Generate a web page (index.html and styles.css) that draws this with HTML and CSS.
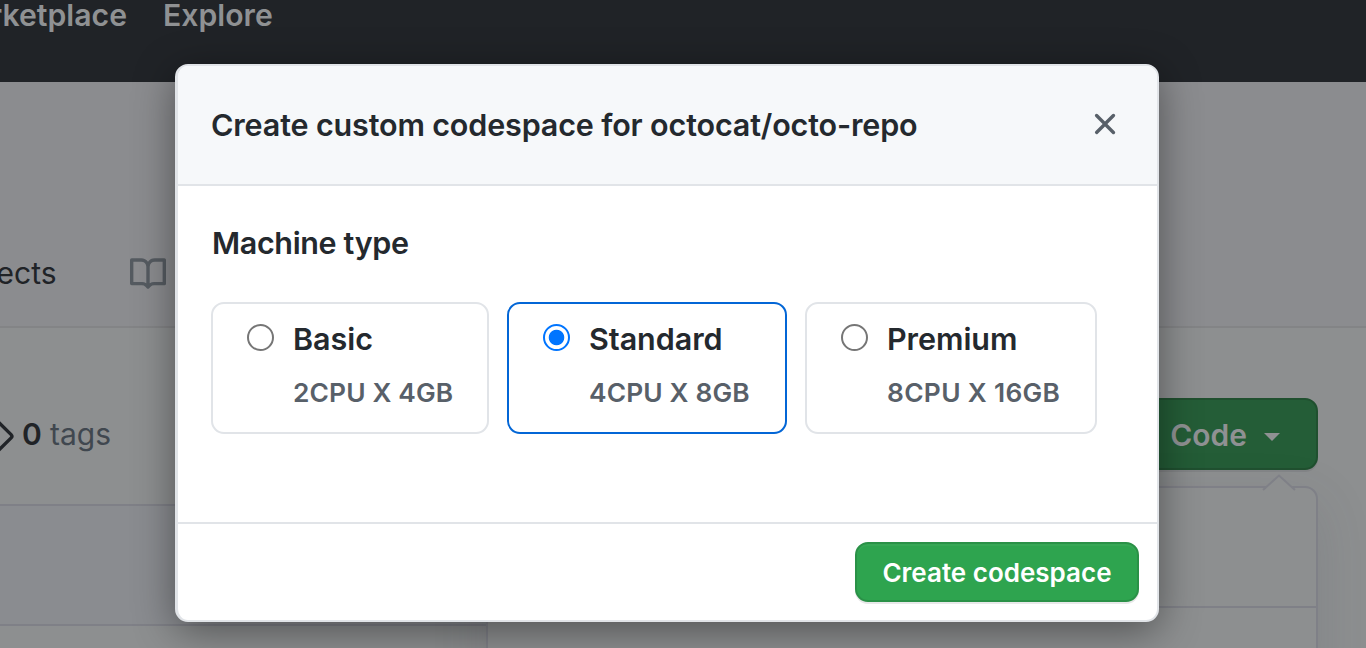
FILE: index.html
```html
<!DOCTYPE html>
<html lang="en">
<head>
<meta charset="utf-8">
<title>Create custom codespace</title>
<link rel="stylesheet" href="styles.css">
</head>
<body>
<div class="page">
  <header class="topbar">
    <nav class="topnav"><span class="topnav-first">Marketplace</span><span class="topnav-item">Explore</span></nav>
  </header>
  <section class="repo-head">
    <div class="tabs">
      <span class="tab-projects">Projects</span>
      <svg class="icon-book" viewBox="0 0 16 16"><path fill-rule="evenodd" d="M0 1.75A.75.75 0 01.75 1h4.253c1.227 0 2.317.59 3 1.501A3.744 3.744 0 0111.006 1h4.245a.75.75 0 01.75.75v10.5a.75.75 0 01-.75.75h-4.507a2.25 2.25 0 00-1.591.659l-.622.621a.75.75 0 01-1.06 0l-.622-.621A2.25 2.25 0 005.258 13H.75a.75.75 0 01-.75-.75V1.75zm8.755 3a2.25 2.25 0 012.25-2.25H14.5v9h-3.757c-.71 0-1.4.201-1.992.572l.004-7.322zm-1.504 7.324l.004-5.073-.002-2.253A2.25 2.25 0 005.003 2.5H1.5v9h3.757a3.75 3.75 0 011.994.574z"/></svg>
    </div>
  </section>
  <section class="toolbar">
    <div class="tags">
      <svg class="icon-tag" viewBox="0 0 16 16"><path fill-rule="evenodd" d="M2.5 7.775V2.75a.25.25 0 01.25-.25h5.025a.25.25 0 01.177.073l6.25 6.25a.25.25 0 010 .354l-5.025 5.025a.25.25 0 01-.354 0l-6.25-6.25a.25.25 0 01-.073-.177zm-1.5 0V2.75C1 1.784 1.784 1 2.75 1h5.025c.464 0 .91.184 1.238.513l6.25 6.25a1.75 1.75 0 010 2.474l-5.026 5.026a1.75 1.75 0 01-2.474 0l-6.25-6.25A1.75 1.75 0 011 7.775zM6 5a1 1 0 100 2 1 1 0 000-2z"/></svg>
      <b class="tag-count">0</b><span class="tag-label">tags</span>
    </div>
    <div class="code-wrap">
      <div class="code-btn"><span class="code-label">Code</span><i class="caret"></i></div>
      <div class="menu"><svg class="menu-arrow" viewBox="0 0 34 18"><path d="M1 16L17 1.5L33 16" /></svg><div class="menu-row"></div></div>
    </div>
  </section>
  <section class="files"><div class="file-head"></div><div class="file-row"></div></section>
</div>

<div class="backdrop">
  <div class="dialog" role="dialog">
    <header class="dialog-head">
      <h1 class="dialog-title">Create custom codespace for octocat/octo-repo</h1>
      <svg class="icon-x" viewBox="0 0 16 16"><path fill-rule="evenodd" d="M3.72 3.72a.75.75 0 011.06 0L8 6.94l3.22-3.22a.75.75 0 111.06 1.06L9.06 8l3.22 3.22a.75.75 0 11-1.06 1.06L8 9.06l-3.22 3.22a.75.75 0 01-1.06-1.06L6.94 8 3.72 4.78a.75.75 0 010-1.06z"/></svg>
    </header>
    <div class="dialog-body">
      <h2 class="section-title">Machine type</h2>
      <div class="options">
        <label class="option basic"><i class="radio"></i><span class="option-text"><span class="option-name">Basic</span><span class="option-spec">2CPU X 4GB</span></span></label>
        <label class="option standard selected"><i class="radio"></i><span class="option-text"><span class="option-name">Standard</span><span class="option-spec">4CPU X 8GB</span></span></label>
        <label class="option premium"><i class="radio"></i><span class="option-text"><span class="option-name">Premium</span><span class="option-spec">8CPU X 16GB</span></span></label>
      </div>
    </div>
    <footer class="dialog-foot"><button class="create-btn">Create codespace</button></footer>
  </div>
</div>
</body>
</html>
```
FILE: styles.css
```css
* { box-sizing: border-box; }
body { margin: 0; width: 1366px; height: 648px; overflow: hidden; position: relative; font-family: Inter, "Liberation Sans", sans-serif; color: #24292e; }
h1, h2 { margin: 0; font-weight: 600; }
i { display: block; }
span, b, h1, h2 { white-space: nowrap; }

.page { height: 648px; overflow: hidden; background: #8d8f90; display: flex; flex-direction: column; }
.topbar { flex: none; height: 82px; background: #202327; }
.topnav { display: flex; gap: 36px; height: 30px; line-height: 30px; font-size: 30.2px; font-weight: 600; color: #8f9193; }
.topnav-first { width: 127px; display: flex; justify-content: flex-end; }
.repo-head { flex: none; height: 246px; padding-top: 173px; background: #8b8c8f; border-bottom: 2px solid #838486; }
.tabs { display: flex; height: 37px; line-height: 37px; font-size: 30px; color: #202327; }
.tab-projects { width: 56.5px; display: flex; justify-content: flex-end; }
.icon-book { flex: none; width: 36px; height: 36px; margin-left: 73.5px; margin-top: 1px; fill: #555b61; }
.toolbar { flex: none; height: 176px; padding: 70px 48px 0 0; display: flex; justify-content: space-between; }
.tags { display: flex; height: 72px; line-height: 72px; font-size: 30px; }
.icon-tag { flex: none; width: 36px; height: 36px; margin: 18px 8px 0 -22px; fill: #202327; }
.tag-count { font-weight: 600; color: #202327; width: 28px; }
.tag-label { color: #40474f; }
.code-wrap { position: relative; width: 220px; }
.code-btn { height: 72px; border: 2px solid #20502f; border-radius: 13px; background: #245d37; display: flex; align-items: center; justify-content: flex-end; padding-right: 36px; box-shadow: 0 2px 0 rgba(27,31,35,.08); }
.code-label { margin-top: 2px; font-size: 30px; font-weight: 600; color: #8f9193; }
.caret { margin: 5px 0 0 17px; border: 8px solid transparent; border-top-color: #8f9193; border-bottom: 0; }
.menu { position: absolute; top: 88px; right: 0; width: 832px; height: 200px; border: 2px solid #7f8087; border-radius: 13px; background: #8d8f90; box-shadow: 0 18px 54px rgba(70,74,84,.15); }
.menu-arrow { position: absolute; right: 20px; top: -14px; width: 34px; height: 18px; fill: #8d8f90; stroke: #7f8087; stroke-width: 2; }
.menu-row { height: 120px; border-bottom: 2px solid #7f8087; }
.files { width: 488px; flex: 1; border: 2px solid #7f8087; border-width: 2px 2px 0 0; }
.file-head { height: 120px; background: #8a8c90; border-bottom: 2px solid #7f8087; }

.backdrop { position: absolute; inset: 0; padding: 64px 0 0 175px; }
.dialog { width: 984px; height: 558px; border: 2px solid #e1e4e8; border-left-width: 3px; border-radius: 13px; background: #fff; display: flex; flex-direction: column; overflow: hidden; box-shadow: 0 9px 42px rgba(0,0,0,.43); }
.dialog-head { flex: none; height: 120px; padding: 0 34px 0 33px; display: flex; justify-content: space-between; align-items: center; background: #f6f8fa; border-bottom: 2px solid #e1e4e8; }
.dialog-title { font-size: 30.5px; line-height: 40px; letter-spacing: -.15px; }
.icon-x { width: 36px; height: 36px; margin-bottom: 2px; fill: #586069; }
.dialog-body { flex: 1; padding: 37px 33px 0; }
.section-title { padding-left: 1px; font-size: 30.5px; line-height: 40px; letter-spacing: -.36px; }
.options { display: flex; gap: 18px; margin-top: 39px; }
.option { height: 132px; border: 2px solid #e1e4e8; border-radius: 13px; display: flex; padding: 20px 0 0 34px; }
.basic { width: 278px; }
.standard { width: 280px; }
.premium { width: 292px; }
.selected { border-color: #0366d6; }
.radio { flex: none; width: 27px; height: 27px; margin: 0 19px 0 0; border: 2px solid #767676; border-radius: 50%; }
.selected .radio { border-color: #0075ff; background: radial-gradient(circle, #0075ff 7.3px, #fff 8.2px); }
.option-text { display: flex; flex-direction: column; }
.option-name { font-size: 30.5px; font-weight: 600; line-height: 30px; letter-spacing: -.05px; }
.option-spec { font-size: 26.3px; font-weight: 600; line-height: 32px; margin-top: 23px; letter-spacing: .15px; color: #586069; }
.premium .option-spec { letter-spacing: .32px; }
.dialog-foot { flex: none; height: 98px; border-top: 2px solid #e1e4e8; padding: 18px 18px 0; display: flex; justify-content: flex-end; }
.create-btn { width: 284px; height: 60px; padding: 0; border: 2px solid #2a9147; border-radius: 13px; background: #2ea44f; color: #fff; font: 600 26px Inter, "Liberation Sans", sans-serif; box-shadow: 0 2px 0 rgba(27,31,35,.1), inset 0 2px 0 rgba(255,255,255,.04); }
```
